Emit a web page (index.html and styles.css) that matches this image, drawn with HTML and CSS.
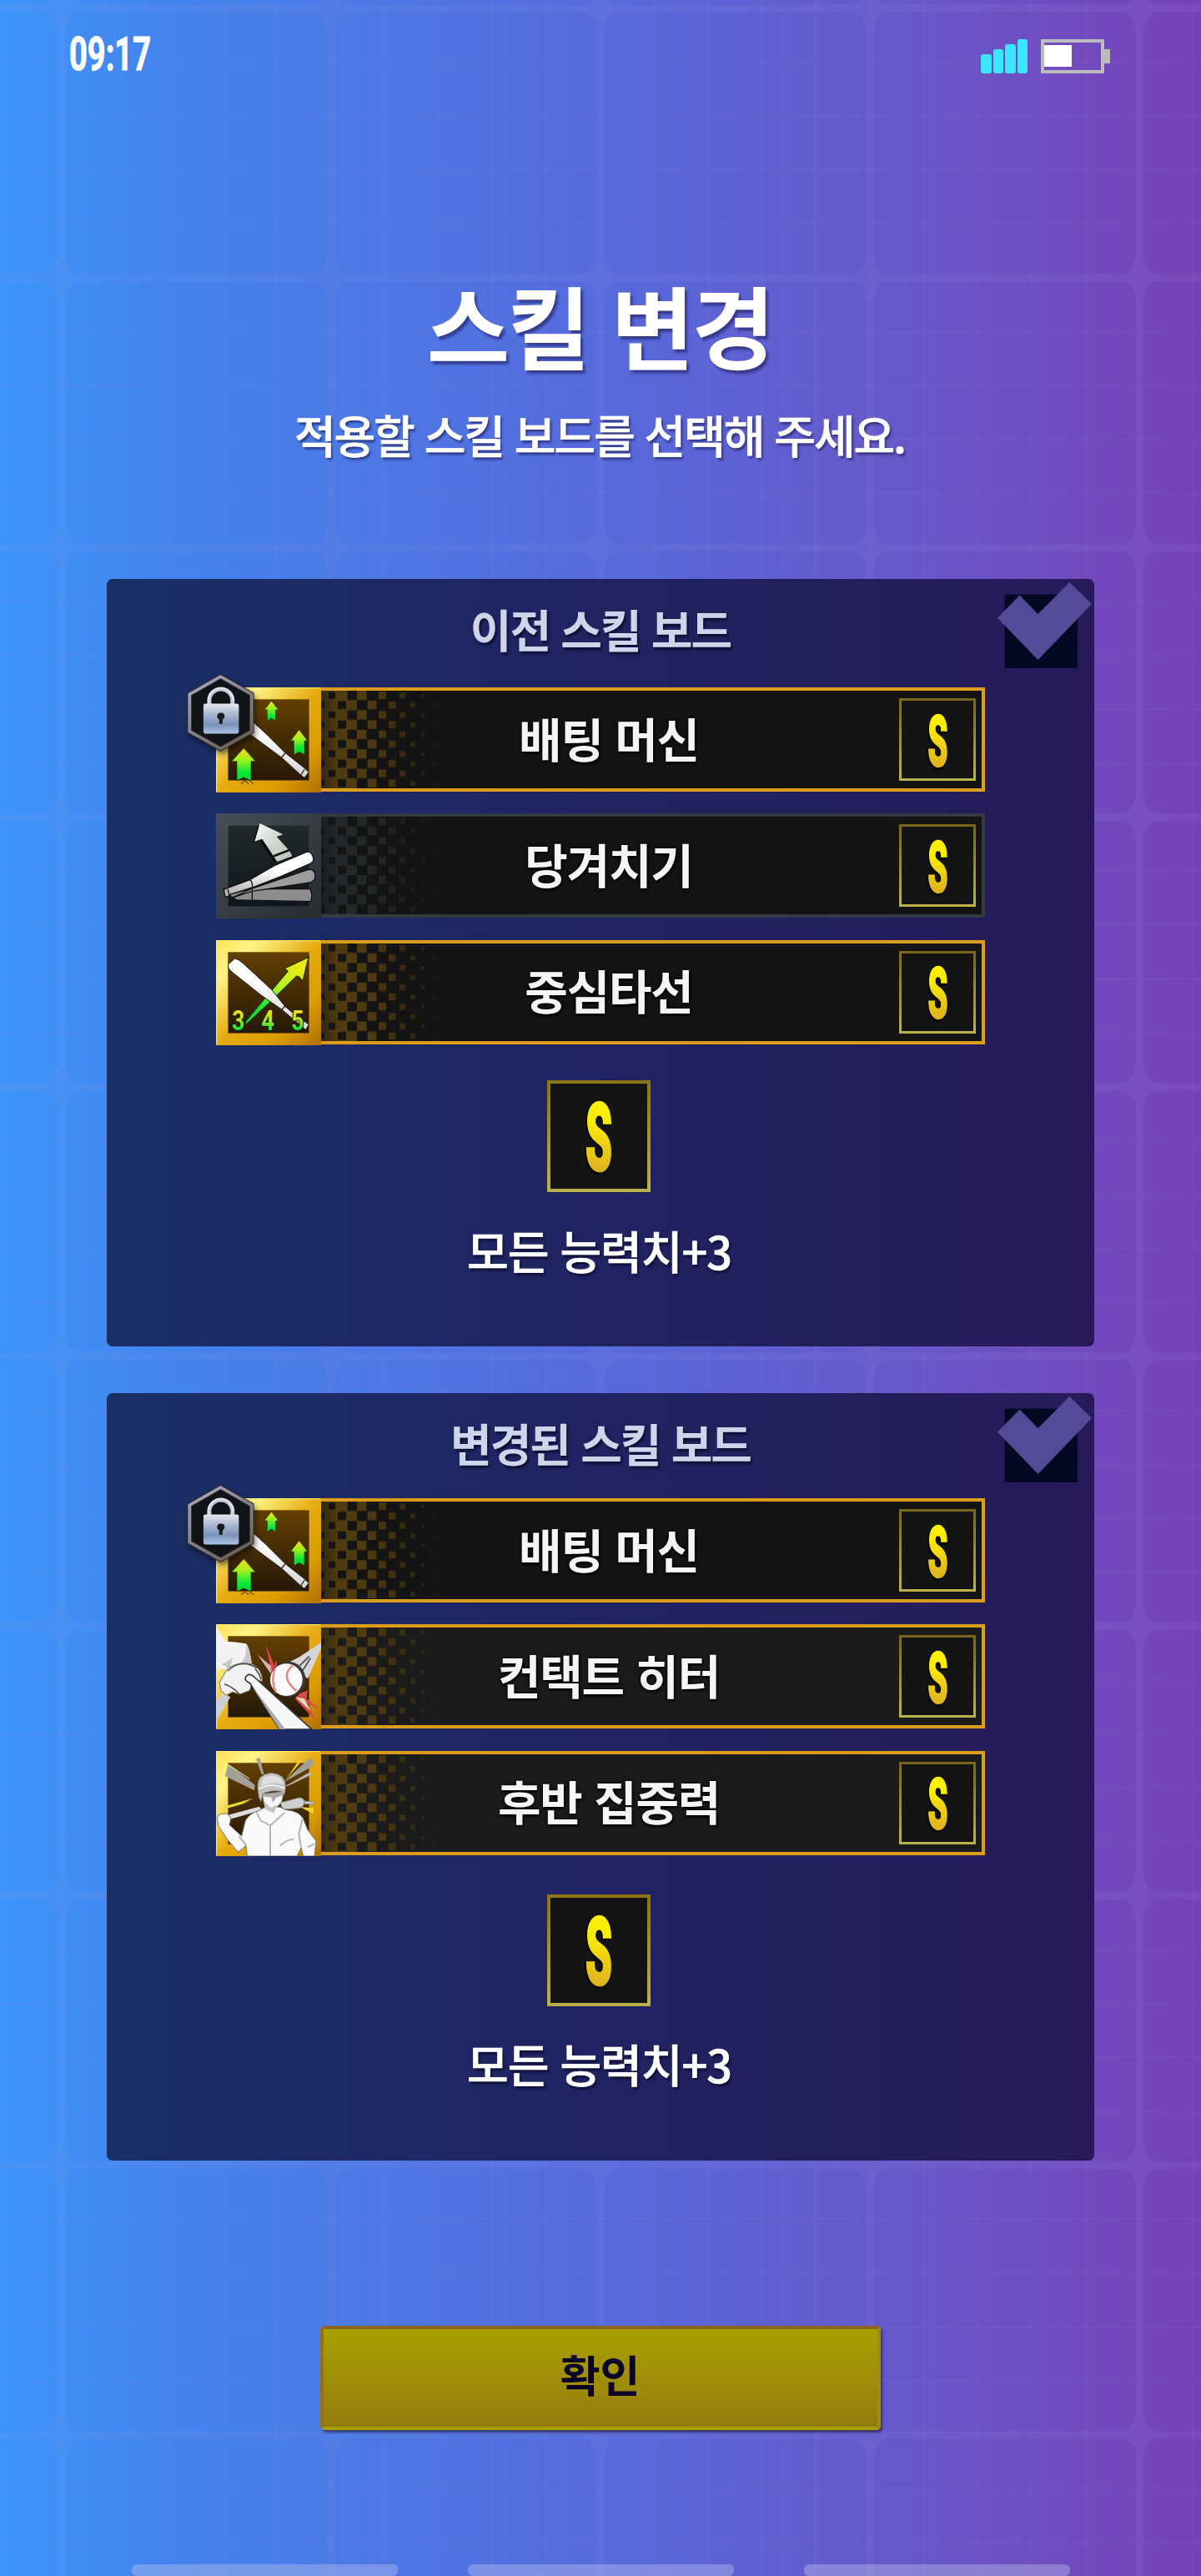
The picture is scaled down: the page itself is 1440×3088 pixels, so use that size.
FILE: index.html
```html
<!DOCTYPE html>
<html lang="ko">

<head>
  <meta charset="utf-8">
  <meta name="viewport" content="width=device-width, initial-scale=1.0">
  <title>스킬 변경</title>
  <link rel="stylesheet" href="styles.css">
</head>

<body>

  <!-- shared gradients, patterns and icons -->
  <svg class="defs" width="0" height="0">
    <defs>
      <pattern id="grid" x="73.5" y="10" width="323.2" height="323.2" patternUnits="userSpaceOnUse">
        <g stroke="#9a8ce0" stroke-opacity=".06" stroke-width="3">
          <path d="M64.6 0V323M129.3 0V323M193.9 0V323M258.6 0V323"/>
          <path d="M0 64.6H323M0 129.3H323M0 193.9H323M0 258.6H323"/>
        </g>
        <path fill="#a0a0e8" fill-opacity=".1" fill-rule="evenodd" d="M0 0H323.2V323.2H0ZM18 4.5Q8 7 4.5 26V297Q8 316 18 318.7H305Q315 316 318.7 297V26Q315 7 305 4.5Z"/>
      </pattern>

      <g id="dots">
        <path fill-rule="evenodd" d="M0 0H43V23.4H0ZM0 13.5V21H4V13.5ZM9 1.5V9.5H17V1.5ZM20 12.5V22H30V12.5ZM31.5 0V11.2H43V0Z"/>
        <path d="M43 0h11.5v11.2H43ZM55.8 12h10.6v10.4H55.8ZM69 1h9v9h-9ZM81 13h8.5v8.5H81ZM94.2 2.2h7v7h-7ZM107 14.4h6v6h-6ZM120 3.8h4v4h-4ZM133 16h3v3h-3Z"/>
      </g>
      <pattern id="halftone-gold" width="190" height="23.4" patternUnits="userSpaceOnUse">
        <use href="#dots" fill="#4f3b10"/>
      </pattern>
      <pattern id="halftone-steel" width="190" height="23.4" patternUnits="userSpaceOnUse">
        <use href="#dots" fill="#23282b"/>
      </pattern>
      <linearGradient id="fade">
        <stop offset="0" stop-color="#fff" stop-opacity=".5"/>
        <stop offset=".1" stop-color="#fff"/>
        <stop offset=".3" stop-color="#fff"/>
        <stop offset=".72" stop-color="#fff" stop-opacity=".25"/>
      </linearGradient>
      <mask id="halftone-mask"><rect width="190" height="118" fill="url(#fade)"/></mask>

      <linearGradient id="gold" x1="0" y1="0" x2="1" y2="1">
        <stop offset="0" stop-color="#ffe058"/>
        <stop offset=".2" stop-color="#fff487"/>
        <stop offset=".5" stop-color="#e6ab10"/>
        <stop offset=".75" stop-color="#dd9d00"/>
        <stop offset="1" stop-color="#b06e08"/>
      </linearGradient>
      <linearGradient id="gold-inner" x1="0" y1="0" x2="0" y2="1">
        <stop offset="0" stop-color="#643f02"/>
        <stop offset="1" stop-color="#251807"/>
      </linearGradient>
      <linearGradient id="steel" x1="0" y1="0" x2="1" y2="1">
        <stop offset="0" stop-color="#474e59"/>
        <stop offset="1" stop-color="#252d2f"/>
      </linearGradient>
      <linearGradient id="steel-inner" x1="0" y1="0" x2="0" y2="1">
        <stop offset="0" stop-color="#212a2a"/>
        <stop offset="1" stop-color="#10161c"/>
      </linearGradient>
      <linearGradient id="lime" x1="0" y1="0" x2="0" y2="1">
        <stop offset="0" stop-color="#ffd51a"/>
        <stop offset=".35" stop-color="#a6f01e"/>
        <stop offset=".75" stop-color="#08e83a"/>
        <stop offset="1" stop-color="#0ad534"/>
      </linearGradient>
      <linearGradient id="lineup-fill" gradientUnits="userSpaceOnUse" x1="0" y1="252" x2="0" y2="325">
        <stop offset="0" stop-color="#ffd820"/>
        <stop offset=".5" stop-color="#a8e828"/>
        <stop offset="1" stop-color="#08de38"/>
      </linearGradient>
      <linearGradient id="spear" x1="1" y1="0" x2="0" y2="1">
        <stop offset="0" stop-color="#ffe60e"/>
        <stop offset=".45" stop-color="#b8f226"/>
        <stop offset=".7" stop-color="#22e838"/>
        <stop offset="1" stop-color="#10d838"/>
      </linearGradient>
      <linearGradient id="bat" x1=".7" y1="0" x2=".3" y2="1">
        <stop offset=".4" stop-color="#fff"/>
        <stop offset="1" stop-color="#b4b4b4"/>
      </linearGradient>
      <linearGradient id="arrow-grey" x1="0" y1="0" x2="1" y2="1">
        <stop offset="0" stop-color="#f8f8f8"/>
        <stop offset=".5" stop-color="#cfd6cf"/>
        <stop offset="1" stop-color="#b9c6b9"/>
      </linearGradient>
      <linearGradient id="lock-body" x1="0" y1="0" x2="0" y2="1">
        <stop offset="0" stop-color="#e6e6ee"/>
        <stop offset=".35" stop-color="#a9b8d0"/>
        <stop offset=".7" stop-color="#7b93b8"/>
        <stop offset="1" stop-color="#a9c4e6"/>
      </linearGradient>
      <linearGradient id="hex-ring" x1="0" y1="0" x2=".6" y2="1">
        <stop offset="0" stop-color="#b0adbd"/>
        <stop offset=".5" stop-color="#8b8793"/>
        <stop offset="1" stop-color="#6f6455"/>
      </linearGradient>
      <linearGradient id="grade" gradientUnits="userSpaceOnUse" x1="0" y1="0" x2="0" y2="88">
        <stop offset="0" stop-color="#fff200"/>
        <stop offset=".3" stop-color="#fcec04"/>
        <stop offset="1" stop-color="#dcb020"/>
      </linearGradient>
    </defs>

    <symbol id="frame-gold" viewBox="0 0 378 378">
      <rect width="378" height="378" fill="url(#gold)"/>
      <path d="M2 376V2H376" fill="none" stroke="#ffe86b" stroke-width="3"/>
      <rect x="44" y="44" width="290" height="290" fill="url(#gold-inner)" stroke="#7a5208" stroke-width="2"/>
    </symbol>

    <symbol id="frame-steel" viewBox="0 0 378 378">
      <rect width="378" height="378" fill="url(#steel)"/>
      <rect x="44" y="44" width="290" height="290" fill="url(#steel-inner)"/>
    </symbol>

    <symbol id="skill-machine" viewBox="0 0 378 378">
      <use href="#frame-gold"/>
      <path d="M90 347l14-12 14 12M120 335l16 12" fill="none" stroke="#7a5208" stroke-width="4"/>
      <g fill="url(#lime)" stroke="#1c3a06" stroke-width="2">
        <path d="M199 48L225 81H215V121L199 111 184 121V81H174Z"/>
        <path d="M299 152L329 192H318V242L299 232 280 242V192H268Z"/>
        <path d="M100 218L142 266H126V335L100 324 75 335V266H56Z"/>
      </g>
      <path d="M117 110L180 167 249 236 320 292 333 305 318 325 305 315 236 252 160 196 112 160Z" fill="url(#bat)" stroke="#111" stroke-width="2"/>
      <path d="M236 252l12-15M305 315l14-21" stroke="#222" stroke-width="4"/>
    </symbol>

    <symbol id="skill-pull" viewBox="0 0 378 378">
      <use href="#frame-steel"/>
      <path d="M150 45L134 105 158 100 210 178 262 158" fill="#0b0d0e"/>
      <path d="M158 36L241 76 218 84 264 134 274 154 220 174 166 92 139 101Z" fill="url(#arrow-grey)"/>
      <path d="M204 155L264 132" stroke="#111" stroke-width="8"/>
      <path d="M40 290L130 272H338Q350 293 340 317L75 312Z" fill="#8d8d8d" stroke="#111" stroke-width="4"/>
      <path d="M58 303L130 270 330 203Q356 198 357 226 356 244 338 249L130 280Z" fill="#9c9c9c" stroke="#111" stroke-width="4"/>
      <path d="M28 273L120 240 210 188 325 139Q343 134 350 160 353 173 340 180L230 228 130 267 48 293 42 301 32 297Z" fill="url(#bat)" stroke="#111" stroke-width="4"/>
      <path d="M122 237Q134 252 130 270V312M42 273L48 292" fill="none" stroke="#111" stroke-width="4"/>
    </symbol>

    <symbol id="skill-center" viewBox="0 0 378 378">
      <use href="#frame-gold"/>
      <path d="M333 61L246 102 258 112 172 213 105 294 108 304 192 226 290 130 299 132 312 148Z" fill="url(#spear)" stroke="#26340a" stroke-width="4"/>
      <path d="M68 66Q80 68 98 84L200 178 248 238 320 298 330 307 320 320 237 250 165 200 54 112Q40 100 44 86Z" fill="url(#bat)" stroke="#1a1a1a" stroke-width="3"/>
      <path d="M236 252l12-16" stroke="#222" stroke-width="4"/>
      <path d="M316 292L332 304 322 322Z" fill="#ddd"/>
    </symbol>

    <symbol id="skill-contact" viewBox="0 0 378 378">
      <use href="#frame-gold"/>
      <path d="M132 82L198 168 180 74 210 150 216 128 226 172 200 178Z" fill="#e0434a"/>
      <path d="M150 110L200 182 198 150Z" fill="#d8b0b0"/>
      <path d="M284 268L356 344 330 285 374 306 326 268 330 238 300 250Z" fill="#d9484a"/>
      <path d="M286 262L340 312 318 268Z" fill="#ddb"/>
      <path d="M256 140L300 118 378 66V88L330 196Z" fill="#d6d6d6"/>
      <path d="M300 150L335 116M312 166L340 122" stroke="#444" stroke-width="5"/>
      <circle cx="258" cy="198" r="64" fill="#3a3836"/>
      <circle cx="253" cy="200" r="58" fill="#fbfbfb"/>
      <path d="M276 148Q226 190 290 240M212 160Q196 206 216 246" fill="none" stroke="#ec8078" stroke-width="7"/>
      <path d="M0 8L34 62Q70 62 108 70 120 80 128 140L60 165 0 160Z" fill="#f3f3f3"/>
      <path d="M108 70Q122 90 128 140L88 142Q112 120 108 70ZM20 145L60 120 50 160Z" fill="#c9c9c9"/>
      <path d="M0 280L22 250 52 262 0 350Z" fill="#cfcfcf"/>
      <path d="M42 158Q85 132 132 144 165 160 167 205L130 200 122 238 85 252 60 244 36 256 18 238 12 210Z" fill="#f1f1f1" stroke="#77705a" stroke-width="3"/>
      <path d="M42 168Q90 122 148 158M30 215Q62 226 85 252M140 160Q156 174 162 200" fill="none" stroke="#54524c" stroke-width="5"/>
      <path d="M112 184Q124 176 140 192L344 378H228L122 212Q94 200 112 184Z" fill="#f7f7f7" stroke="#353535" stroke-width="5"/>
      <path d="M130 224L250 378H228Z" fill="#aaa"/>
    </symbol>

    <symbol id="skill-late" viewBox="0 0 378 378">
      <use href="#frame-gold"/>
      <path d="M144 28L158 25 172 84 164 84ZM44 48L140 122 138 142 32 90ZM244 112L334 28 350 30 348 55Z" fill="#a3a196"/>
      <path d="M250 126L340 74 342 86 258 126Z" fill="#b9b7ad"/>
      <path d="M42 48L120 100" stroke="#fff" stroke-width="3"/>
      <path d="M252 102L296 36 310 34ZM34 198L132 170 98 190 36 208ZM300 200L352 206 350 226Z" fill="#e9d92e"/>
      <path d="M38 232L155 200 166 212 48 246Z" fill="#dcdcdc"/>
      <path d="M232 186L300 168Q320 170 318 188 312 204 296 206L240 210ZM318 180l34 4v8l-34-2Z" fill="#cfcfcf" stroke="#8d8d84" stroke-width="3"/>
      <!-- raised arm, torso, lowered arm -->
      <path d="M4 236L18 226 40 226 54 240 48 266 92 306 106 250Q120 224 160 212L176 202H230L252 212Q304 216 316 250L330 284 360 324 354 378H314L306 348 292 378H112L108 340 80 364 42 320 8 268Z" fill="#f9f9f9" stroke="#77736a" stroke-width="3"/>
      <path d="M168 160L242 152 236 182 214 206 206 222 178 208 172 184Z" fill="#f4f4f4" stroke="#a5a298" stroke-width="2"/>
      <path d="M168 154L240 146 240 160 216 168 204 186 198 166 172 164Z" fill="#aaa"/>
      <path d="M172 180L196 204 232 190 214 208 206 222 178 208Z" fill="#c4c4c4"/>
      <path d="M150 130Q146 84 200 79 252 84 250 130L246 158 238 146Q200 138 168 154L162 182 154 166Z" fill="#c2c2c2" stroke="#88847a" stroke-width="2"/>
      <path d="M168 98Q200 78 232 98 240 106 244 120 200 108 160 126Z" fill="#dedede"/>
      <path d="M154 136Q200 112 246 134" fill="none" stroke="#f6f6f6" stroke-width="5"/>
      <path d="M146 220L160 250 196 268 246 222M195 268V378M312 240L298 300 306 346M82 306L108 338M230 340Q270 310 280 320M330 346L354 334" fill="none" stroke="#b4b4b4" stroke-width="6"/>
    </symbol>

    <symbol id="lock" viewBox="0 0 242 280">
      <path d="M121 9L233 73V207L121 270 9 207V73Z" fill="#111317" stroke="#2b2c35" stroke-width="17"/>
      <path d="M121 9L233 73V207L121 270 9 207V73Z" fill="none" stroke="url(#hex-ring)" stroke-width="11"/>
      <path d="M80 112V96a42 42 0 0 1 84 0V112" fill="none" stroke="#c4cbdc" stroke-width="15"/>
      <path d="M77 104V96a45 45 0 0 1 90 0" fill="none" stroke="#eef0f6" stroke-width="4"/>
      <rect x="59" y="107" width="128" height="108" rx="7" fill="url(#lock-body)"/>
      <path d="M122 140a12 12 0 0 1 6 23V180H116V163a12 12 0 0 1 6-23Z" fill="#17191d"/>
    </symbol>

    <symbol id="check" viewBox="0 0 340 310">
      <rect x="26" y="44" width="263" height="266" fill="#010a22"/>
      <path d="M0 129L80 47 146 114 260 0 340 78 146 280Z" fill="#544a98"/>
    </symbol>

    <symbol id="checkers-gold" viewBox="0 0 190 118">
      <g mask="url(#halftone-mask)"><rect width="190" height="117" fill="url(#halftone-gold)"/></g>
    </symbol>

    <symbol id="checkers-steel" viewBox="0 0 190 118">
      <g mask="url(#halftone-mask)"><rect width="190" height="117" fill="url(#halftone-steel)"/></g>
    </symbol>
  </svg>

  <svg class="backdrop" width="1440" height="3088">
    <rect width="1440" height="3088" fill="url(#grid)"/>
  </svg>

  <div class="screen">
    <header class="status">
      <svg class="clock" width="110" height="57">
        <text x="1" y="41" textLength="98" lengthAdjust="spacingAndGlyphs">09:17</text>
      </svg>
      <div class="status-icons">
        <div class="signal"><i></i><i></i><i></i><i></i></div>
        <div class="battery"><i></i></div>
      </div>
    </header>

    <h1 class="title">스킬 변경</h1>
    <p class="subtitle">적용할 스킬 보드를 선택해 주세요.</p>

    <main class="boards">
      <section class="board board-before">
        <svg class="check"><use href="#check"/></svg>
        <h2>이전 스킬 보드</h2>
        <ul class="skills">
          <li class="skill">
            <svg class="skill-icon"><use href="#skill-machine"/></svg>
            <svg class="lock"><use href="#lock"/></svg>
            <div class="bar">
              <svg class="checkers"><use href="#checkers-gold"/></svg>
              <span class="name">배팅 머신</span>
              <div class="grade"><svg viewBox="0 0 36 88"><text x="2" y="85" textLength="32" lengthAdjust="spacingAndGlyphs">S</text></svg></div>
            </div>
          </li>
          <li class="skill steel">
            <svg class="skill-icon"><use href="#skill-pull"/></svg>
            <div class="bar">
              <svg class="checkers"><use href="#checkers-steel"/></svg>
              <span class="name">당겨치기</span>
              <div class="grade"><svg viewBox="0 0 36 88"><text x="2" y="85" textLength="32" lengthAdjust="spacingAndGlyphs">S</text></svg></div>
            </div>
          </li>
          <li class="skill">
            <svg class="skill-icon" viewBox="0 0 378 378">
              <use href="#skill-center"/>
              <g class="lineup">
                <text x="58" y="324" textLength="45" lengthAdjust="spacingAndGlyphs">3</text>
                <text x="163" y="324" textLength="47" lengthAdjust="spacingAndGlyphs">4</text>
                <text x="271" y="324" textLength="45" lengthAdjust="spacingAndGlyphs">5</text>
              </g>
            </svg>
            <div class="bar">
              <svg class="checkers"><use href="#checkers-gold"/></svg>
              <span class="name">중심타선</span>
              <div class="grade"><svg viewBox="0 0 36 88"><text x="2" y="85" textLength="32" lengthAdjust="spacingAndGlyphs">S</text></svg></div>
            </div>
          </li>
        </ul>
        <div class="grade total"><svg viewBox="0 0 36 88"><text x="2" y="85" textLength="32" lengthAdjust="spacingAndGlyphs">S</text></svg></div>
        <p class="bonus">모든 능력치+3</p>
      </section>

      <section class="board board-after">
        <svg class="check"><use href="#check"/></svg>
        <h2>변경된 스킬 보드</h2>
        <ul class="skills">
          <li class="skill">
            <svg class="skill-icon"><use href="#skill-machine"/></svg>
            <svg class="lock"><use href="#lock"/></svg>
            <div class="bar">
              <svg class="checkers"><use href="#checkers-gold"/></svg>
              <span class="name">배팅 머신</span>
              <div class="grade"><svg viewBox="0 0 36 88"><text x="2" y="85" textLength="32" lengthAdjust="spacingAndGlyphs">S</text></svg></div>
            </div>
          </li>
          <li class="skill fresh">
            <svg class="skill-icon"><use href="#skill-contact"/></svg>
            <div class="bar">
              <svg class="checkers"><use href="#checkers-gold"/></svg>
              <span class="name">컨택트 히터</span>
              <div class="grade"><svg viewBox="0 0 36 88"><text x="2" y="85" textLength="32" lengthAdjust="spacingAndGlyphs">S</text></svg></div>
            </div>
          </li>
          <li class="skill fresh">
            <svg class="skill-icon"><use href="#skill-late"/></svg>
            <div class="bar">
              <svg class="checkers"><use href="#checkers-gold"/></svg>
              <span class="name">후반 집중력</span>
              <div class="grade"><svg viewBox="0 0 36 88"><text x="2" y="85" textLength="32" lengthAdjust="spacingAndGlyphs">S</text></svg></div>
            </div>
          </li>
        </ul>
        <div class="grade total"><svg viewBox="0 0 36 88"><text x="2" y="85" textLength="32" lengthAdjust="spacingAndGlyphs">S</text></svg></div>
        <p class="bonus">모든 능력치+3</p>
      </section>
    </main>

    <button class="confirm" type="button">확인</button>

    <nav class="tabs"><i></i><i></i><i></i></nav>
  </div>

</body>

</html>
```
FILE: styles.css
```css
* {
  box-sizing: border-box;
}

body {
  margin: 0;
  background: linear-gradient(90deg, #3c94fa 0%, #4484ee 14%, #5868da 53%, #6e50c2 85%, #7741b7 100%);
  color: #fff;
  font-family: "Noto Sans CJK KR", "Noto Sans", sans-serif;
}

h1, h2, p, ul {
  margin: 0;
  padding: 0;
  list-style: none;
}

.defs,
.backdrop {
  position: absolute;
  top: 0;
  left: 0;
}

.screen {
  position: relative;
  display: flex;
  flex-direction: column;
  align-items: center;
  width: 1440px;
  height: 3088px;
  overflow: hidden;
}

/* status bar */
.status {
  display: flex;
  justify-content: space-between;
  width: 100%;
  height: 100px;
  padding: 43px 109px 0 82px;
}

.clock {
  overflow: visible;
}

.clock text {
  font: bold 56px Roboto, sans-serif;
  fill: #fff;
  stroke: #fff;
  stroke-width: 1px;
}

.status-icons {
  display: flex;
  gap: 16px;
  height: 41px;
  margin-top: 4px;
}

.signal {
  display: flex;
  align-items: flex-end;
  gap: 2px;
}

.signal i {
  width: 12.5px;
  height: 23px;
  border-radius: 3px;
  background: #3be6ff;
}

.signal i:nth-child(2) { height: 29px; }
.signal i:nth-child(3) { height: 35px; }
.signal i:nth-child(4) { height: 41px; }

.battery {
  position: relative;
  width: 76px;
  height: 41px;
  padding: 3px 0;
  margin-right: 7px;
  border: 4px solid #bdbbc0;
}

.battery i {
  display: block;
  width: 33px;
  height: 26px;
  background: #fff;
}

.battery::after {
  content: "";
  position: absolute;
  top: 8px;
  right: -11px;
  width: 7px;
  height: 17px;
  background: #bdbbc0;
}

/* heading */
.title {
  height: 150px;
  margin-top: 213px;
  padding-right: 2px;
  font-size: 108px;
  font-weight: 700;
  line-height: 150px;
  letter-spacing: -2.6px;
  text-shadow: 3px 4px 3px rgba(30, 30, 90, .6);
}

.subtitle {
  height: 76px;
  margin-top: 20px;
  padding-right: 2px;
  font-size: 54px;
  font-weight: 500;
  line-height: 76px;
  letter-spacing: -2.1px;
  text-shadow: 2px 3px 3px rgba(30, 30, 90, .7);
  -webkit-text-stroke: .7px #fff;
}

/* boards */
.boards {
  display: flex;
  flex-direction: column;
  gap: 56px;
  width: 1184px;
  margin-top: 135px;
}

.board {
  position: relative;
  display: flex;
  flex-direction: column;
  align-items: center;
  height: 920px;
  border-radius: 7px;
  background: linear-gradient(90deg, #193067 0%, #202462 45%, #271a59 100%);
}

.board h2 {
  height: 130px;
  padding-top: 22px;
  color: #ced5ea;
  font-size: 54px;
  font-weight: 700;
  line-height: 76px;
  letter-spacing: -2px;
  text-shadow: 2px 3px 3px rgba(0, 0, 20, .6);
}

.check {
  position: absolute;
  top: 4px;
  right: 3px;
  width: 113px;
  height: 103px;
}

.skills {
  display: flex;
  flex-direction: column;
  gap: 25.3px;
  width: 922px;
}

.skill {
  position: relative;
  display: flex;
  height: 126px;
}

.skill-icon {
  flex: none;
  width: 126px;
  height: 126px;
}

.lock {
  position: absolute;
  top: -16px;
  left: -35px;
  width: 81px;
  height: 93px;
  filter: drop-shadow(2px 4px 3px rgba(0, 0, 0, .5));
}

.bar {
  position: relative;
  display: flex;
  align-items: center;
  justify-content: flex-end;
  flex: 1;
  height: 125px;
  padding-right: 7px;
  border: 4px solid #dc9c1d;
  border-left: 0;
  background: #141414;
}

.fresh .bar {
  background: #1b1b1b;
}

.steel .bar {
  border-color: #343a41;
}

.checkers {
  position: absolute;
  top: 0;
  left: 0;
  width: 190px;
  height: 118px;
}

.name {
  width: 500px;
  margin-right: 98px;
  padding-bottom: 6px;
  color: #f5f5f3;
  font-size: 56px;
  font-weight: 700;
  line-height: 76px;
  letter-spacing: -1.2px;
  text-align: center;
  text-shadow: 0 0 4px #000, 1px 2px 3px #000;
}

.grade {
  display: flex;
  align-items: center;
  justify-content: center;
  width: 92px;
  height: 99px;
  border: 3px solid;
  border-image: linear-gradient(#7b6718, #b9b24e) 1;
  background: #141414;
}

.grade svg {
  width: 27px;
  height: 66px;
  overflow: visible;
  filter: drop-shadow(-1px 2px 1px #000);
}

.grade text {
  font: 900 114px Roboto, sans-serif;
  fill: url(#grade);
  stroke: url(#grade);
  stroke-width: 3px;
}

.lineup text {
  font: bold 98px Roboto, sans-serif;
  fill: url(#lineup-fill);
  stroke: #20200c;
  stroke-width: 7px;
  paint-order: stroke;
}

.total {
  width: 124px;
  height: 134px;
  margin: 42px 4px 0 0;
  border-width: 4px;
  border-image: linear-gradient(#8c7418, #b9b24e) 1;
}

.total svg {
  width: 36px;
  height: 88px;
}

.bonus {
  margin-top: 32px;
  padding-right: 3px;
  font-size: 54px;
  font-weight: 500;
  line-height: 76px;
  letter-spacing: -1px;
  text-shadow: 2px 3px 3px rgba(0, 0, 20, .6);
  -webkit-text-stroke: .7px #fff;
}

.board-after h2 {
  height: 126px;
}

.board-after .total {
  margin-top: 46px;
}

.board-after .bonus {
  margin-top: 31px;
}

/* confirm */
.confirm {
  width: 672px;
  height: 125px;
  margin: 198px 1px 0 0;
  padding: 0 0 9px;
  border: 4px solid;
  border-color: #8c6620 #a08c10 #a89f08 #92701c;
  border-radius: 5px;
  background: linear-gradient(#a9a000, #957c10);
  box-shadow: 2px 3px 3px rgba(40, 35, 60, .7);
  color: #0c0228;
  font: 700 52px/76px "Noto Sans CJK KR", sans-serif;
}

.tabs {
  display: flex;
  gap: 84px;
  margin-top: 161px;
}

.tabs i {
  width: 319px;
  height: 14px;
  border-radius: 6px;
  background: rgba(190, 195, 235, .4);
}
```
